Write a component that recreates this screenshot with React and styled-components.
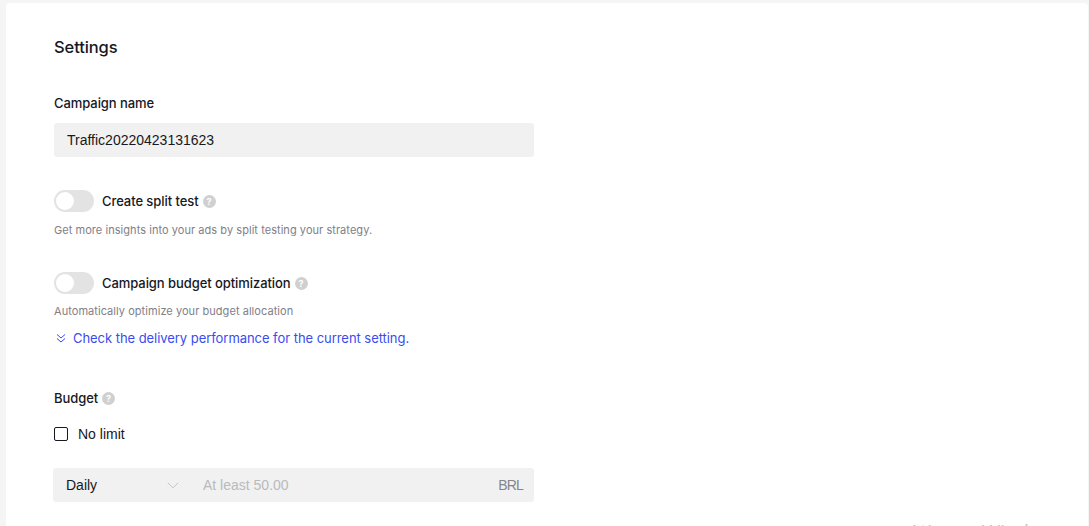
import React from "react";
import styled, { createGlobalStyle } from "styled-components";

const Global = createGlobalStyle`
  html, body { margin: 0; padding: 0; height: 100%; background: #f5f5f5; overflow: hidden; }
  #root { height: 100%; }
`;

const Page = styled.div`
  position: relative;
  height: 526px;
  width: 1089px;
  overflow: hidden;
  padding: 3px 1px 0 6px;
  box-sizing: border-box;
  background: #f5f5f5;
`;

const Card = styled.main`
  background: #fff;
  border-radius: 4px 4px 0 0;
  height: 560px;
  box-sizing: border-box;
  padding: 33px 48px 0;
  width: 1082px;
  font-family: "Inter", "Liberation Sans", sans-serif;
  color: #161823;
`;

const Title = styled.h2`
  margin: 0;
  font-size: 16.5px;
  line-height: 22px;
  font-weight: 500;
  letter-spacing: -0.1px;
`;

const Label = styled.div`
  display: flex;
  align-items: center;
  gap: 4px;
  font-size: 13px;
  line-height: 18px;
  font-weight: 500;
  letter-spacing: -0.07px;
  margin-top: ${p => p.$top || 0}px;
`;

const NameField = styled.div`
  width: 480px;
  height: 34px;
  margin-top: 11px;
  background: #f1f1f1;
  border-radius: 3px;
  display: flex;
  align-items: center;
  padding: 0 13px;
  box-sizing: border-box;
  font-family: "Liberation Sans", Arial, sans-serif;
  font-size: 14px;
  color: #161823;
`;

const SwitchRow = styled.div`
  display: flex;
  align-items: center;
  gap: 8px;
  margin-top: ${p => p.$top}px;
`;

const Track = styled.div`
  width: 40px;
  height: 22px;
  border-radius: 11px;
  background: #e3e3e3;
  padding: 2px;
  box-sizing: border-box;
`;

const Knob = styled.div`
  width: 18px;
  height: 18px;
  border-radius: 50%;
  background: #fff;
`;

const Hint = styled.p`
  margin: ${p => p.$top}px 0 0;
  font-size: 11px;
  line-height: 16px;
  color: #7f8087;
  letter-spacing: 0.05px;
`;

const HelpBadge = styled.span`
  width: 13px;
  height: 13px;
  border-radius: 50%;
  background: #d0d0d0;
  color: #fff;
  font-size: 9px;
  line-height: 13px;
  font-weight: 700;
  text-align: center;
  flex: none;
  margin-top: 1px;
`;

const LinkRow = styled.a`
  display: flex;
  align-items: center;
  gap: 6px;
  margin: 9px 0 0 1px;
  font-size: 13px;
  line-height: 20px;
  color: #3a4cf0;
  letter-spacing: -0.05px;
`;

const CheckRow = styled.label`
  display: flex;
  align-items: center;
  gap: 10px;
  margin-top: 18px;
  font-family: "Liberation Sans", Arial, sans-serif;
  font-size: 14px;
  line-height: 18px;
`;

const Box = styled.span`
  width: 12px;
  height: 12px;
  border: 1.5px solid #161823;
  border-radius: 2px;
  flex: none;
`;

const BudgetField = styled.div`
  width: 481px;
  height: 34px;
  margin: 25px 0 0 -1px;
  background: #f1f1f1;
  border-radius: 3px;
  display: flex;
  align-items: center;
  box-sizing: border-box;
  padding: 0 11px 0 13px;
  font-family: "Liberation Sans", Arial, sans-serif;
  font-size: 14px;
`;

const SelectValue = styled.span`
  width: 101px;
  color: #161823;
`;

const Placeholder = styled.span`
  flex: 1;
  margin-left: 24px;
  color: #b9babd;
`;

const Currency = styled.span`
  color: #85868b;
  font-size: 14px;
  letter-spacing: -0.8px;
`;

const Watermark = styled.div`
  position: absolute;
  left: 908px;
  top: 518px;
  font-family: "Open Sans", "Liberation Sans", sans-serif;
  font-size: 20px;
  line-height: 27px;
  color: #c4c4c4;
  white-space: nowrap;
  letter-spacing: -0.3px;
`;

const Help = () => <HelpBadge>?</HelpBadge>;

const Toggle = () => (
  <Track>
    <Knob />
  </Track>
);

export default function App() {
  return (
    <Page>
      <Global />
      <Card>
        <Title>Settings</Title>
        <Label $top={36}>Campaign name</Label>
        <NameField>Traffic20220423131623</NameField>

        <SwitchRow $top={33}>
          <Toggle />
          <Label>
            Create split test <Help />
          </Label>
        </SwitchRow>
        <Hint $top={10}>Get more insights into your ads by split testing your strategy.</Hint>

        <SwitchRow $top={34}>
          <Toggle />
          <Label>
            Campaign budget optimization <Help />
          </Label>
        </SwitchRow>
        <Hint $top={9}>Automatically optimize your budget allocation</Hint>
        <LinkRow>
          <svg width="12" height="12" viewBox="0 0 12 12" fill="none" stroke="#3a4cf0" strokeWidth="1">
            <path d="M2 2.5 6 6l4-3.5M2 6.5l4 3.5 4-3.5" />
          </svg>
          Check the delivery performance for the current setting.
        </LinkRow>

        <Label $top={41}>
          Budget <Help />
        </Label>
        <CheckRow>
          <Box />
          No limit
        </CheckRow>
        <BudgetField>
          <SelectValue>Daily</SelectValue>
          <svg width="12" height="7" viewBox="0 0 12 7" fill="none" stroke="#c4c4c6" strokeWidth="1">
            <path d="M.8.8 6 5.8 11.2.8" />
          </svg>
          <Placeholder>At least 50.00</Placeholder>
          <Currency>BRL</Currency>
        </BudgetField>
      </Card>
      <Watermark>Ativar o Windows</Watermark>
    </Page>
  );
}
